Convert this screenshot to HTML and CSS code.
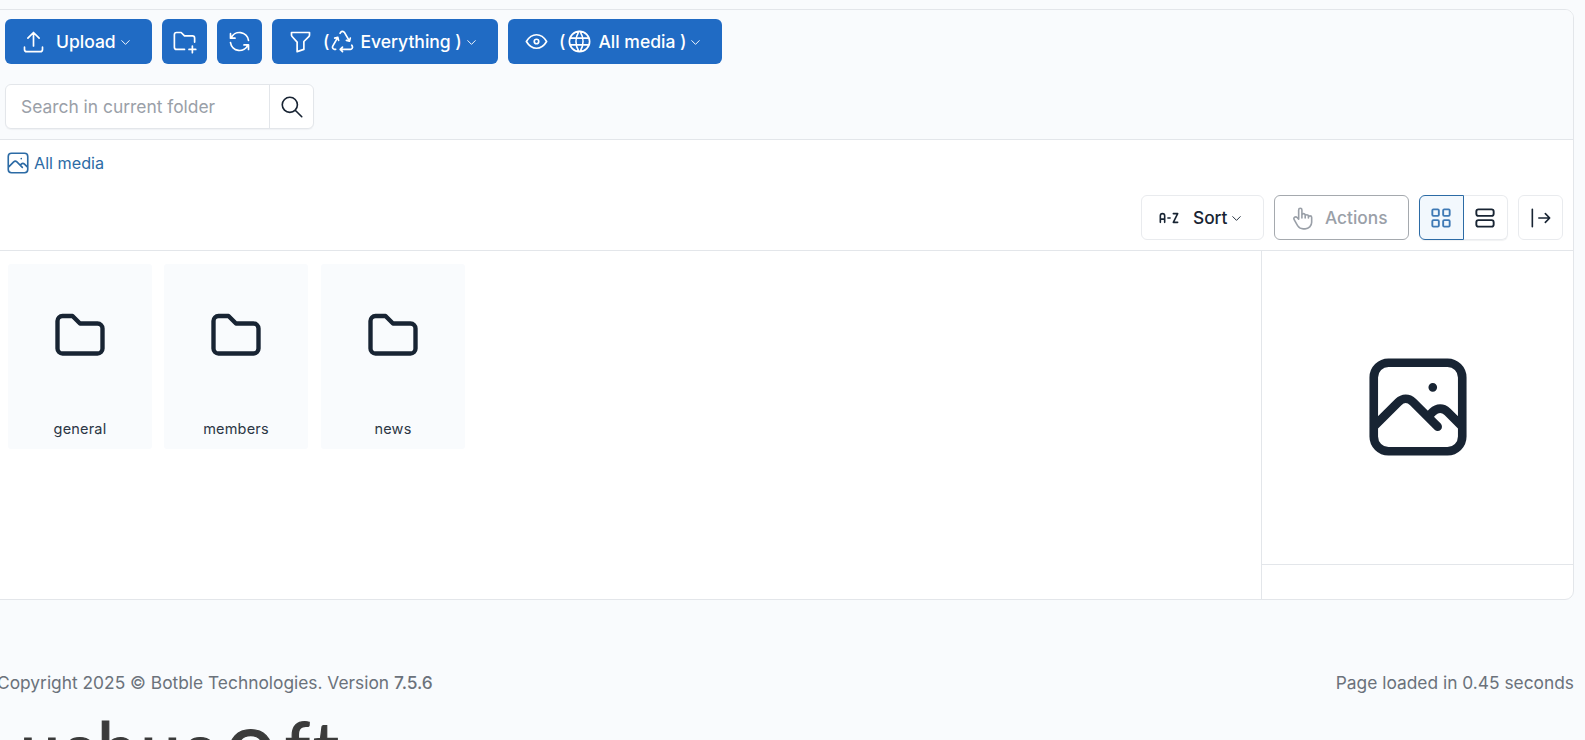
FILE: index.html
```html
<!DOCTYPE html>
<html lang="en">
<head>
<meta charset="utf-8">
<title>Media</title>
<link rel="stylesheet" href="styles.css">
</head>
<body>
<svg class="sprite" width="0" height="0" aria-hidden="true">
  <symbol id="i-upload" viewBox="0 0 24 24"><path d="M4 17v2a2 2 0 0 0 2 2h12a2 2 0 0 0 2 -2v-2M7 9l5 -5l5 5M12 4l0 12"/></symbol>
  <symbol id="i-chev" viewBox="0 0 24 24"><path d="M6 9l6 6l6 -6"/></symbol>
  <symbol id="i-folder-plus" viewBox="0 0 24 24"><path d="M12 19h-7a2 2 0 0 1 -2 -2v-11a2 2 0 0 1 2 -2h4l3 3h7a2 2 0 0 1 2 2v3.500M16 19h6M19 16v6"/></symbol>
  <symbol id="i-refresh" viewBox="0 0 24 24"><path d="M20 11a8.100 8.100 0 0 0 -15.500 -2m-.5 -4v4h4M4 13a8.100 8.100 0 0 0 15.500 2m.5 4v-4h-4"/></symbol>
  <symbol id="i-filter" viewBox="0 0 24 24"><path d="M4 4h16v2.172a2 2 0 0 1 -.586 1.414l-4.414 4.414v7l-6 2v-8.500l-4.480 -4.928a2 2 0 0 1 -.52 -1.345v-2.227z"/></symbol>
  <symbol id="i-recycle" viewBox="0 0 24 24"><path d="M12 17l-2 2l2 2M10 19h9a2 2 0 0 0 1.750 -2.750l-.55 -1M8.536 11l-.732 -2.732l-2.732 .732M7.804 8.268l-4.500 7.794a2 2 0 0 0 1.506 2.890l1.141 .024M15.464 11l2.732 .732l.732 -2.732M18.196 11.732l-4.500 -7.794a2 2 0 0 0 -3.256 -.14l-.591 .976"/></symbol>
  <symbol id="i-eye" viewBox="0 0 24 24"><path d="M10 12a2 2 0 1 0 4 0a2 2 0 0 0 -4 0M21 12c-2.400 4 -5.400 6 -9 6c-3.600 0 -6.600 -2 -9 -6c2.400 -4 5.400 -6 9 -6c3.600 0 6.600 2 9 6"/></symbol>
  <symbol id="i-world" viewBox="0 0 24 24"><path d="M3 12a9 9 0 1 0 18 0a9 9 0 0 0 -18 0M3.600 9h16.800M3.600 15h16.800M11.500 3a17 17 0 0 0 0 18M12.500 3a17 17 0 0 1 0 18"/></symbol>
  <symbol id="i-search" viewBox="0 0 24 24"><path d="M3 10a7 7 0 1 0 14 0a7 7 0 1 0 -14 0M21 21l-6 -6"/></symbol>
  <symbol id="i-photo" viewBox="0 0 24 24"><path d="M15 8h.01M3 6a3 3 0 0 1 3 -3h12a3 3 0 0 1 3 3v12a3 3 0 0 1 -3 3h-12a3 3 0 0 1 -3 -3v-12zM3 16l5 -5c.928 -.893 2.072 -.893 3 0l5 5M14 14l1 -1c.928 -.893 2.072 -.893 3 0l3 3"/></symbol>
  <symbol id="i-az" viewBox="0 0 24 24"><path d="M16 8h4l-4 8h4M4 16v-6a2 2 0 1 1 4 0v6M4 13h4M11 12h2"/></symbol>
  <symbol id="i-hand" viewBox="0 0 24 24"><path d="M8 13v-8.500a1.500 1.500 0 0 1 3 0v7.500M11 11.500v-2a1.500 1.500 0 0 1 3 0v2.500M14 10.500a1.500 1.500 0 0 1 3 0v1.500M17 11.500a1.500 1.500 0 0 1 3 0v4.500a6 6 0 0 1 -6 6h-2h.208a6 6 0 0 1 -5.012 -2.700a69.740 69.740 0 0 1 -.196 -.3c-.312 -.479 -1.407 -2.388 -3.286 -5.728a1.500 1.500 0 0 1 .536 -2.022a1.867 1.867 0 0 1 2.280 .28l1.470 1.470"/></symbol>
  <symbol id="i-grid" viewBox="0 0 24 24"><path d="M4 5a1 1 0 0 1 1 -1h4a1 1 0 0 1 1 1v4a1 1 0 0 1 -1 1h-4a1 1 0 0 1 -1 -1zM14 5a1 1 0 0 1 1 -1h4a1 1 0 0 1 1 1v4a1 1 0 0 1 -1 1h-4a1 1 0 0 1 -1 -1zM4 15a1 1 0 0 1 1 -1h4a1 1 0 0 1 1 1v4a1 1 0 0 1 -1 1h-4a1 1 0 0 1 -1 -1zM14 15a1 1 0 0 1 1 -1h4a1 1 0 0 1 1 1v4a1 1 0 0 1 -1 1h-4a1 1 0 0 1 -1 -1z"/></symbol>
  <symbol id="i-rows" viewBox="0 0 24 24"><path d="M4 6a2 2 0 0 1 2 -2h12a2 2 0 0 1 2 2v2a2 2 0 0 1 -2 2h-12a2 2 0 0 1 -2 -2zM4 16a2 2 0 0 1 2 -2h12a2 2 0 0 1 2 2v2a2 2 0 0 1 -2 2h-12a2 2 0 0 1 -2 -2z"/></symbol>
  <symbol id="i-bar-right" viewBox="0 0 24 24"><path d="M20 12l-10 0M20 12l-4 4M20 12l-4 -4M4 4l0 16"/></symbol>
  <symbol id="i-folder" viewBox="0 0 24 24"><path d="M5 4h4l3 3h7a2 2 0 0 1 2 2v8a2 2 0 0 1 -2 2h-14a2 2 0 0 1 -2 -2v-11a2 2 0 0 1 2 -2"/></symbol>
</svg>

<div class="page">
  <section class="card">
    <header class="toolbar">
      <div class="btn-row">
        <button class="btn btn-upload"><svg class="ico"><use href="#i-upload"/></svg><span>Upload</span><svg class="chev"><use href="#i-chev"/></svg></button>
        <button class="btn btn-square"><svg class="ico"><use href="#i-folder-plus"/></svg></button>
        <button class="btn btn-square"><svg class="ico"><use href="#i-refresh"/></svg></button>
        <button class="btn btn-filter"><svg class="ico"><use href="#i-filter"/></svg><span class="paren">(</span><svg class="ico ico-inner"><use href="#i-recycle"/></svg><span>Everything )</span><svg class="chev"><use href="#i-chev"/></svg></button>
        <button class="btn btn-view"><svg class="ico"><use href="#i-eye"/></svg><span class="paren">(</span><svg class="ico ico-inner"><use href="#i-world"/></svg><span>All media )</span><svg class="chev"><use href="#i-chev"/></svg></button>
      </div>
      <div class="search">
        <div class="search-input">Search in current folder</div>
        <div class="search-btn"><svg class="ico"><use href="#i-search"/></svg></div>
      </div>
    </header>

    <nav class="crumb"><svg class="crumb-ico"><use href="#i-photo"/></svg><span>All media</span></nav>

    <div class="actions-row">
      <button class="tool tool-sort"><svg class="ico ico-az"><use href="#i-az"/></svg><span>Sort</span><svg class="chev"><use href="#i-chev"/></svg></button>
      <button class="tool tool-actions"><svg class="ico"><use href="#i-hand"/></svg><span>Actions</span></button>
      <div class="seg">
        <button class="seg-btn seg-active"><svg class="ico"><use href="#i-grid"/></svg></button>
        <button class="seg-btn"><svg class="ico"><use href="#i-rows"/></svg></button>
      </div>
      <button class="tool tool-toggle"><svg class="ico"><use href="#i-bar-right"/></svg></button>
    </div>

    <div class="content">
      <main class="folders">
        <article class="folder"><svg class="folder-ico"><use href="#i-folder"/></svg><div class="folder-name">general</div></article>
        <article class="folder"><svg class="folder-ico"><use href="#i-folder"/></svg><div class="folder-name">members</div></article>
        <article class="folder"><svg class="folder-ico"><use href="#i-folder"/></svg><div class="folder-name">news</div></article>
      </main>
      <aside class="side">
        <div class="preview"><svg class="preview-ico"><use href="#i-photo"/></svg></div>
        <div class="side-foot"></div>
      </aside>
    </div>
  </section>

  <footer class="footer">
    <div>Copyright 2025 © Botble Technologies. Version <span class="ver">7.5.6</span></div>
    <div>Page loaded in 0.45 seconds</div>
  </footer>

  <div class="logo">ushus<span class="logo-o">o</span>ft</div>
</div>
</body>
</html>
```
FILE: styles.css
```css
* { box-sizing: border-box; }
html, body { margin: 0; height: 740px; overflow: hidden; background: #f9fbfd; }
body { font-family: Inter, "Liberation Sans", sans-serif; color: #182433; font-size: 16px; }
.sprite { position: absolute; }
svg { fill: none; stroke: currentColor; stroke-width: 1.75; stroke-linecap: round; stroke-linejoin: round; flex: none; }
button { font: inherit; color: inherit; background: none; border: 0; padding: 0; margin: 0; }

.page { margin-left: -12px; width: 1586px; height: 740px; overflow: hidden; padding-top: 9px; }
.card { background: #fff; border: 1px solid #e3e6ea; border-radius: 9px; height: 591px; display: flex; flex-direction: column; overflow: hidden; }

.toolbar { background: #f9fbfd; height: 130px; border-bottom: 1px solid #e3e6ea; padding: 9px 0 0 16px; display: flex; flex-direction: column; gap: 20px; }
.btn-row { display: flex; gap: 10px; }
.btn { height: 45px; background: #206bc4; color: #fff; border-radius: 6px; display: flex; align-items: center; font-weight: 500; font-size: 17.500px; }
.btn .ico { width: 27px; height: 27px; stroke-width: 1.5; }
.btn-upload { width: 147px; padding-left: 15px; }
.btn-upload span { margin-left: 9px; }
.btn-square { width: 45px; justify-content: center; }
.btn-filter { width: 226px; padding-left: 15px; }
.btn-view { width: 214px; padding-left: 15px; }
.paren { margin-left: 9px; margin-right: 1px; }
.btn-filter .paren { margin-right: 0; }
.ico-inner { margin-right: 5px; }
.btn-filter .ico-inner { margin-right: 4px; }
.chev { width: 15px; height: 15px; margin-left: 2px; margin-top: 1px; stroke-width: 1.5; }

.search { display: flex; width: 309px; height: 45px; background: #fff; border: 1px solid #e3e6ea; border-radius: 6px; box-shadow: 0 1px 1px rgba(24,36,51,.04); }
.search-input { flex: 1; padding-left: 15px; line-height: 44px; color: #9aa0a8; font-size: 17.400px; }
.search-btn { width: 44px; border-left: 1px solid #e3e6ea; display: flex; align-items: center; justify-content: center; color: #182433; }
.search-btn .ico { width: 26px; height: 26px; stroke-width: 1.5; }

.crumb { height: 46px; padding: 0 0 0 16px; display: flex; align-items: center; gap: 3px; color: #2c6ba5; font-size: 16.200px; }
.crumb-ico { width: 26px; height: 26px; stroke-width: 1.5; }

.actions-row { height: 65px; display: flex; justify-content: flex-end; gap: 10px; padding: 9px 10px 0 0; border-bottom: 1px solid #e3e6ea; }
.tool { height: 45px; background: #fff; border: 1px solid #e9ebee; border-radius: 6px; display: flex; align-items: center; font-size: 17.300px; font-weight: 500; }
.tool .ico { width: 26px; height: 26px; stroke-width: 1.5; }
.tool-sort { width: 123px; padding-left: 14px; }
.tool-sort span { margin-left: 11px; }
.ico-az { stroke-width: 1.75; }
.tool-actions { width: 135px; padding-left: 15px; border-color: #a5a9ae; color: #9aa0a8; }
.tool-actions span { margin-left: 9px; }
.tool-toggle { width: 45px; justify-content: center; }
.seg { display: flex; width: 89px; height: 45px; background: #fff; border-radius: 6px; box-shadow: 0 1px 1px rgba(24,36,51,.06); }
.seg-btn { width: 44.500px; border: 1px solid #e9ebee; border-left: 0; border-radius: 0 6px 6px 0; display: flex; align-items: center; justify-content: center; }
.seg-btn .ico { width: 26px; height: 26px; stroke-width: 1.75; }
.seg-active { border: 1px solid #2c6ba5; border-radius: 6px 0 0 6px; background: #f2f8fd; color: #3f7ab5; }

.content { flex: 1; display: flex; min-height: 0; }
.folders { flex: 1; padding: 13px 0 0 19px; display: flex; align-items: flex-start; gap: 12px; }
.folder { width: 144px; height: 185px; background: #f9fbfd; border-radius: 3px; display: flex; flex-direction: column; align-items: center; padding-top: 42px; }
.folder + .folder + .folder { margin-left: 1px; }
.folder-ico { width: 60px; height: 60px; stroke-width: 1.75; }
.folder-name { margin-top: 53px; font-size: 14.500px; line-height: 20px; color: #2b3644; letter-spacing: .2px; }
.side { width: 312px; border-left: 1px solid #e3e6ea; display: flex; flex-direction: column; }
.preview { height: 314px; border-bottom: 1px solid #e3e6ea; display: flex; align-items: center; justify-content: center; padding-bottom: 2px; }
.preview-ico { width: 118px; height: 118px; stroke-width: 1.75; }
.side-foot { flex: 1; }

.footer { display: flex; justify-content: space-between; padding: 72px 0 0 9px; font-size: 17.350px; line-height: 22px; color: #6b727b; }
.ver { font-weight: 500; }
.logo { margin-top: 12px; padding-left: 32px; font-family: Lato, "Liberation Sans", sans-serif; font-size: 72px; line-height: 80px; letter-spacing: 3px; color: #3b3b3b; -webkit-text-stroke: 1.2px #3b3b3b; white-space: nowrap; }
.logo-o { font-size: 88px; line-height: 0; margin: 0 6px 0 8px; }
```
